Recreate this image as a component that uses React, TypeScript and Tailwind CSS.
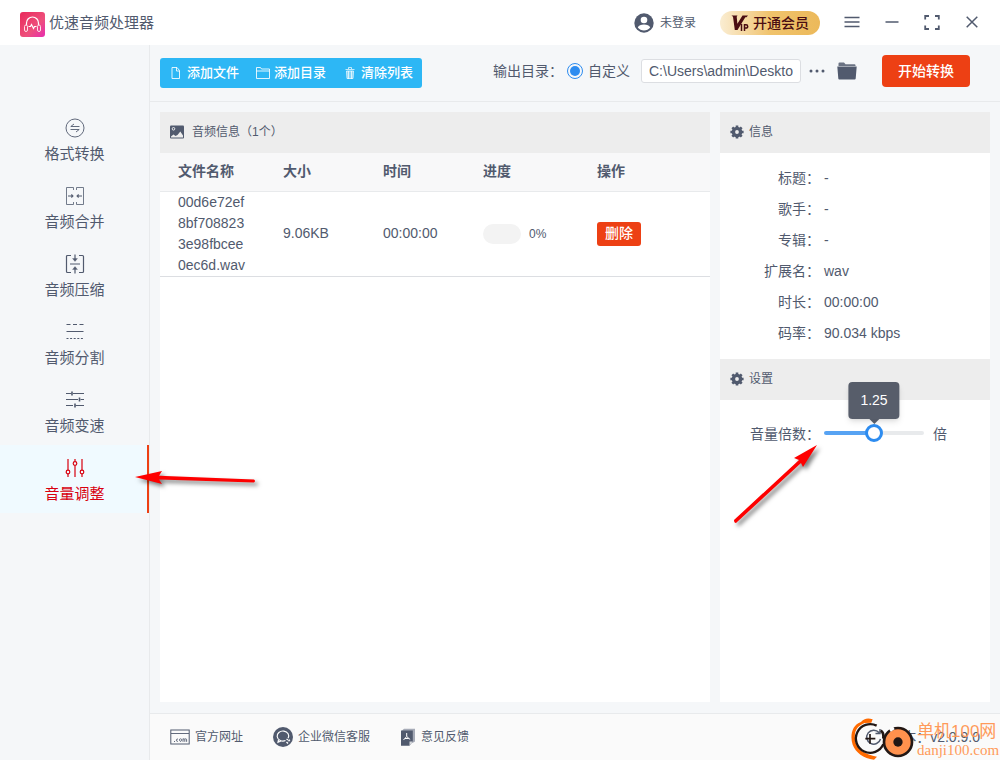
import type { ReactNode } from "react";
import { useState } from "react";

const menu = [
  { label: "格式转换", icon: <ConvertIcon /> },
  { label: "音频合并", icon: <MergeIcon /> },
  { label: "音频压缩", icon: <CompressIcon /> },
  { label: "音频分割", icon: <SplitIcon /> },
  { label: "音频变速", icon: <SpeedIcon /> },
  { label: "音量调整", icon: <VolumeIcon /> },
];

const info = [
  { label: "标题：", value: "-" },
  { label: "歌手：", value: "-" },
  { label: "专辑：", value: "-" },
  { label: "扩展名：", value: "wav" },
  { label: "时长：", value: "00:00:00" },
  { label: "码率：", value: "90.034 kbps" },
];

/* Sidebar icons */

function MenuSvg({ children }: { children: ReactNode }) {
  return (
    <svg width="20" height="20" viewBox="0 0 20 20" fill="none" stroke="currentColor">
      {children}
    </svg>
  );
}

function ConvertIcon() {
  return (
    <MenuSvg>
      <circle cx="10" cy="10" r="9" strokeWidth=".9" />
      <path d="M14.500 8.500H5.800L9 6M5.500 11.500h8.700L11 14" strokeWidth=".9" />
    </MenuSvg>
  );
}

function MergeIcon() {
  return (
    <MenuSvg>
      <path d="M8.500 4V1.500h-7v17h7V16M11.500 4V1.500h7v17h-7V16" strokeWidth=".8" />
      <path d="M3 10h5M12 10h5" />
      <path d="M6.500 8l2 2-2 2zM13.500 8l-2 2 2 2z" fill="currentColor" strokeWidth=".3" />
    </MenuSvg>
  );
}

function CompressIcon() {
  return (
    <MenuSvg>
      <path d="M6 1.500H2.500a1 1 0 0 0-1 1v15a1 1 0 0 0 1 1H6M14 1.500h3.500a1 1 0 0 1 1 1v15a1 1 0 0 1-1 1H14" strokeWidth="1.200" />
      <path d="M5 10h10M10 .5v5M10 19.500v-5" strokeWidth="1.200" />
      <path d="M7.500 4.500h5L10 7.500zM7.500 15.500h5L10 12.500z" fill="currentColor" strokeWidth=".3" />
    </MenuSvg>
  );
}

function SplitIcon() {
  return (
    <MenuSvg>
      <path d="M1.500 2.500h4M8 2.500h4M14.500 2.500h4M1.500 9.500h17" strokeWidth="1.200" />
      <path d="M1.500 16.500h17" strokeDasharray="2 1.600" />
    </MenuSvg>
  );
}

function SpeedIcon() {
  return (
    <MenuSvg>
      <path d="M1 3.500h5.500M8 3.500h11M1 9.500h12M15.500 9.500H19M1 15.500h7M10.500 15.500H19" />
      <path d="M7 1.500v4M14.500 7.500v4M10 13.500v4" strokeWidth="1.600" />
    </MenuSvg>
  );
}

function VolumeIcon() {
  return (
    <MenuSvg>
      <path d="M3 1v11M3 16v3M10 1v2.500M10 7.500V19M17 1v11M17 16v3" strokeWidth="1.200" />
      <circle cx="3" cy="14" r="1.800" strokeWidth="1.200" />
      <circle cx="10" cy="5.500" r="1.800" strokeWidth="1.200" />
      <circle cx="17" cy="14" r="1.800" strokeWidth="1.200" />
    </MenuSvg>
  );
}

/* Other icons */

function LogoIcon() {
  return (
    <svg width="25" height="25" viewBox="0 0 25 25" fill="none">
      <defs>
        <linearGradient id="logo" x1="0" y1="0" x2="1" y2="1">
          <stop offset="0" stopColor="#e9285a" />
          <stop offset=".6" stopColor="#ee4f7c" />
          <stop offset="1" stopColor="#e62db0" />
        </linearGradient>
      </defs>
      <rect width="25" height="25" rx="3" fill="url(#logo)" />
      <path d="M6.500 13v-2a6 6 0 0 1 12 0v2" stroke="#fff" strokeWidth="1.200" />
      <rect x="4.500" y="13" width="3" height="6.500" rx="1.500" stroke="#ffe0e8" />
      <rect x="17.500" y="13" width="3" height="6.500" rx="1.500" stroke="#ffe0e8" />
      <path d="M8.500 14.500h2l1-2 2 4 1-2h2" stroke="#fff" strokeWidth="1.200" />
    </svg>
  );
}

function GearIcon() {
  return (
    <svg width="14" height="14" viewBox="0 0 14 14" fill="none" stroke="currentColor">
      <circle cx="7" cy="7" r="3.600" strokeWidth="3.400" />
      <path d="M7 .4v2M7 11.600v2M.4 7h2M11.600 7h2M2.300 2.300l1.500 1.500M10.200 10.200l1.500 1.500M2.300 11.700l1.500-1.500M10.200 3.800l1.500-1.500" strokeWidth="2.600" />
    </svg>
  );
}

function FileIcon() {
  return (
    <svg width="14" height="14" viewBox="0 0 14 14" fill="none" stroke="currentColor" strokeOpacity=".85">
      <path d="M3 1.500h5l2.500 3v8H3z" />
      <path d="M7.500 1.500v3.500h3" />
    </svg>
  );
}

function DirIcon() {
  return (
    <svg width="14" height="14" viewBox="0 0 14 14" fill="none" stroke="currentColor" strokeOpacity=".85">
      <path d="M.5 12.500v-11h4l1 1.500h8v9.500zM.5 5h13" />
    </svg>
  );
}

function TrashIcon() {
  return (
    <svg width="14" height="14" viewBox="0 0 14 14" fill="none" stroke="currentColor" strokeOpacity=".7">
      <path d="M2.500 3.500h9M5.500 3V1.500h3V3" />
      <path d="M3.500 5h7l-.5 7.500H4z" fill="currentColor" fillOpacity=".4" />
      <path d="M5.500 5v8M8.500 5v8" />
    </svg>
  );
}

function PictureIcon() {
  return (
    <svg width="14" height="14" viewBox="0 0 14 14">
      <rect width="14" height="13" y=".5" rx="1" fill="#515a6e" />
      <circle cx="3.500" cy="3.800" r="1.300" fill="none" stroke="#ededed" />
      <path d="M1 12.500V11.500l2.500-2 2 1.500 2-1 2.800-3.500 2.700 4v2z" fill="#ededed" />
    </svg>
  );
}

function VipIcon() {
  return (
    <svg width="18" height="18" viewBox="0 0 18 18" fill="none">
      <path d="M.5 1.500h6l-.8 1.200.7 7L11.500 1.500H17l-1.500 1.700h-1.200L6.500 16H3.800L2 2.800z" fill="#4a0d12" />
      <path d="M10.500 10v7M13.500 17v-6.300H15a1.700 1.700 0 0 1 0 3.400h-1.500" stroke="#4a0d12" strokeWidth="1.500" />
    </svg>
  );
}

function SiteIcon() {
  return (
    <svg width="20" height="16" viewBox="0 0 20 16" fill="none" stroke="#515a6e">
      <rect x=".8" y="1" width="18.400" height="14" />
      <path d="M1 4.500h18" strokeWidth=".9" />
      <path d="M4 12.500h1M8 10.200c-2.200-1-2.200 3 0 2M10.500 9.800a1 1.300 0 1 0 .1 0M13 12.800V9.600M13 10.400c1-1.200 1.800-.6 1.800.4v2M14.800 10.400c1-1.200 1.800-.6 1.800.4v2" strokeWidth=".9" />
    </svg>
  );
}

function ServiceIcon() {
  return (
    <svg width="20" height="20" viewBox="0 0 20 20" fill="none">
      <circle cx="10" cy="10" r="10" fill="#515a6e" />
      <path d="M12.500 13.500a5.800 5 0 1 1 2.600-2.200M5.500 13l-.5 2.200 3-1.200" stroke="#fff" strokeWidth="1.200" />
      <path d="M13.500 12l1.500 1M16.800 12.800l-1.300 1.500M15 16.500l-1.500-1.500" stroke="#fff" strokeWidth="1.400" />
    </svg>
  );
}

function FeedbackIcon() {
  return (
    <svg width="16" height="18" viewBox="0 0 16 18" fill="none">
      <path d="M2 2.500L4 .8h11v12.700l-2.500 1.500" fill="#a6abb7" />
      <path d="M1 2.500h11.800v11l-3.300 4.300H1z" fill="#515a6e" />
      <path d="M12.800 13.500H9.500v4.300" fill="#d8dade" />
      <path d="M6.700 5v3.500L3.500 12M6.700 8.500l3.500 3M4.800 10.500h4" stroke="#fff" />
    </svg>
  );
}

function SiteMark() {
  return (
    <div className="pointer-events-none absolute bottom-0 right-0 flex h-11 w-[150px] items-end gap-[2px]" aria-hidden="true">
      <svg width="65" height="44" viewBox="60 78 195 132" fill="none" className="shrink-0">
        <path d="M128 88C112 82 101 87 93 96C66 105 59 137 68 164C77 187 100 205 132 209L141 200C105 194 82 179 77 157C69 127 80 108 104 99L124 98z" fill="#ff6a00" />
        <path d="M160 163a43 43 0 1 1-20-56" stroke="#221714" strokeWidth="7" />
        <path d="M106 146h30M120 132v29" stroke="#221714" strokeWidth="5" />
        <path d="M152 122q10 4 8 24" stroke="#221714" strokeWidth="8" />
        <circle cx="204" cy="156" r="42" fill="#ff914d" stroke="#221714" strokeWidth="8" />
        <path d="M177 116l12-7 5 9-12 7z" fill="#fff" />
        <circle cx="204" cy="156" r="14" fill="#221714" />
      </svg>
      <div className="whitespace-nowrap pb-[2px] text-[#ff9a5a]">
        <div className="text-[17px] leading-[20px]">单机100网</div>
        <div className="font-['Liberation_Serif',serif] text-[15px] leading-[16px]">danji100.com</div>
      </div>
    </div>
  );
}

function PanelTitle({ icon, children }: { icon: ReactNode; children: ReactNode }) {
  return (
    <h2 className="flex h-[41px] items-center bg-[#ededed] px-[10px] pb-[2px] text-xs">
      {icon}
      {children}
    </h2>
  );
}

function Header() {
  return (
    <header className="flex h-[45px] items-center justify-between bg-white pl-5 pr-2">
      <div className="flex items-center gap-1 pt-1">
        <LogoIcon />
        <h1 className="pb-1 text-[15px] leading-5">优速音频处理器</h1>
      </div>
      <div className="flex items-center">
        <button className="flex items-center gap-[6px] text-xs">
          <svg width="20" height="20" viewBox="0 0 20 20">
            <circle cx="10" cy="10" r="9.700" fill="#515a6e" />
            <circle cx="10" cy="7" r="3.300" fill="#fff" />
            <path d="M3.800 14.500c1-4 11.400-4 12.400 0c-3 4-9.400 4-12.400 0z" fill="#fff" />
          </svg>
          未登录
        </button>
        <button className="ml-6 mr-3 flex h-6 w-[100px] items-center justify-center gap-1 rounded-full bg-gradient-to-r from-[#faedd2] via-[#f0c36c] to-[#ecb95a] text-sm font-medium text-[#4a0d12]">
          <VipIcon />
          开通会员
        </button>
        <button className="flex w-10 justify-center" aria-label="菜单">
          <svg width="16" height="16" viewBox="0 0 16 16" stroke="#515a6e" strokeWidth="1.500">
            <path d="M.5 2.500h15M.5 7h15M.5 11.500h15" />
          </svg>
        </button>
        <button className="flex w-10 justify-center" aria-label="最小化">
          <svg width="14" height="16" viewBox="0 0 14 16" stroke="#515a6e" strokeWidth="1.500">
            <path d="M.5 7h13" />
          </svg>
        </button>
        <button className="flex w-10 justify-center" aria-label="全屏">
          <svg width="16" height="16" viewBox="0 0 16 16" fill="none" stroke="#515a6e" strokeWidth="1.800">
            <path d="M5 1H1.200V4.500M11 1h3.800V4.500M1.200 10.500V14H5M14.800 10.500V14H11" />
          </svg>
        </button>
        <button className="flex w-10 justify-center" aria-label="关闭">
          <svg width="12" height="16" viewBox="0 0 12 16" stroke="#515a6e" strokeWidth="1.500">
            <path d="M.7 1.700l10.600 10.600M11.300 1.700L.7 12.300" />
          </svg>
        </button>
      </div>
    </header>
  );
}

function Sidebar() {
  return (
    <nav className="w-[150px] shrink-0 border-r border-[#e8eaec] pt-[60px]">
      {menu.map((item) => {
        const active = item.label === "音量调整";
        return (
          <a
            key={item.label}
            href="#"
            className={
              active
                ? "relative flex h-[68px] flex-col items-center gap-[6px] border-r-2 border-[#ed4014] bg-[#f0faff] pl-[2px] pt-[13px] text-[15px] leading-5 text-[#d8000f]"
                : "flex h-[68px] flex-col items-center gap-[6px] pt-[13px] text-[15px] leading-5"
            }
          >
            {item.icon}
            {item.label}
            {active && (
              <svg width="130" height="30" viewBox="0 0 130 30" className="pointer-events-none absolute left-[132px] top-[18px] z-10 drop-shadow-[3px_3px_2px_rgba(0,0,0,0.5)]">
                <path d="M3 14L30 8L27 12.800L122 16.500Q124 18 122 19.500L27 16.500L30 21z" fill="#fe0000" />
              </svg>
            )}
          </a>
        );
      })}
    </nav>
  );
}

function Toolbar() {
  return (
    <div className="flex h-[57px] items-center justify-between border-b border-[#e8eaec] pl-[10px] pr-[30px]">
      <div className="flex h-[30px] rounded-[3px] bg-[#2db7f5] pr-px text-[13px] font-medium text-white">
        <button className="flex items-center gap-1 pl-[9px] pr-2">
          <FileIcon />
          添加文件
        </button>
        <button className="flex items-center gap-1 pl-[9px] pr-2">
          <DirIcon />
          添加目录
        </button>
        <button className="flex items-center gap-1 pl-[9px] pr-2">
          <TrashIcon />
          清除列表
        </button>
      </div>
      <div className="flex items-center pb-1">
        <span>输出目录：</span>
        <label className="ml-1 flex items-center gap-[5px]">
          <input
            type="radio"
            name="output"
            defaultChecked
            className="size-4 appearance-none rounded-full border border-[#2d8cf0] bg-white bg-clip-content p-[2px] checked:bg-[#2d8cf0]"
          />
          自定义
        </label>
        <input
          type="text"
          aria-label="输出目录"
          defaultValue="C:\Users\admin\Deskto"
          className="ml-[11px] h-6 w-40 rounded-[3px] border border-[#dcdee2] bg-white px-[7px]"
        />
        <button className="ml-2" aria-label="更多">
          <svg width="16" height="16" viewBox="0 0 16 16" fill="#515a6e">
            <circle cx="2" cy="8" r="1.500" />
            <circle cx="8" cy="8" r="1.500" />
            <circle cx="14" cy="8" r="1.500" />
          </svg>
        </button>
        <button className="ml-3" aria-label="打开文件夹">
          <svg width="20" height="18" viewBox="0 0 20 18" fill="#515a6e">
            <path d="M1.500 4V1.500a1 1 0 0 1 1-1H7l1.500 1.700h9a1 1 0 0 1 1 1V4z" fillOpacity=".85" />
            <path d="M.3 4.600h19.400l-1 12a1 1 0 0 1-1 .9H2.300a1 1 0 0 1-1-.9z" />
          </svg>
        </button>
        <button className="ml-[25px] h-8 w-[88px] rounded-[4px] bg-[#ed4014] font-medium text-white">开始转换</button>
      </div>
    </div>
  );
}

function FilePanel() {
  return (
    <section className="min-w-0 flex-1 bg-white">
      <PanelTitle icon={<span className="mr-2"><PictureIcon /></span>}>音频信息（1个）</PanelTitle>
      <table className="w-full table-fixed border-collapse text-left leading-[21px]">
        <thead>
          <tr className="h-[38px] border-b border-[#e8eaec] bg-[#f8f8f9]">
            <th className="w-[105px] px-[18px] font-bold">文件名称</th>
            <th className="w-[100px] px-[18px] font-bold">大小</th>
            <th className="w-[100px] px-[18px] font-bold">时间</th>
            <th className="w-[114px] px-[18px] font-bold">进度</th>
            <th className="px-[18px] font-bold">操作</th>
          </tr>
        </thead>
        <tbody>
          <tr className="border-b border-[#dcdee2]">
            <td className="break-all px-[18px]">00d6e72ef8bf7088233e98fbcee0ec6d.wav</td>
            <td className="px-[18px]">9.06KB</td>
            <td className="px-[18px]">00:00:00</td>
            <td className="px-[18px]">
              <div className="flex items-center gap-2 text-xs">
                <div className="h-5 w-[38px] rounded-full bg-[#f3f3f3]" />
                0%
              </div>
            </td>
            <td className="px-[18px]">
              <button className="h-6 w-11 rounded-[3px] bg-[#ed4014] font-medium text-white">删除</button>
            </td>
          </tr>
        </tbody>
      </table>
    </section>
  );
}

function VolumeSlider() {
  const [volume, setVolume] = useState(1.25);
  const percent = (volume / 2.5) * 100;

  return (
    <div className="relative flex h-[31px] items-center">
      <label htmlFor="volume" className="w-[100px] text-right">
        音量倍数：
      </label>
      <div className="relative ml-1 flex w-[100px] items-center pb-[2px]">
        <input
          id="volume"
          type="range"
          min="0"
          max="2.5"
          step="0.05"
          value={volume}
          onChange={(e) => setVolume(Number(e.target.value))}
          className="h-1 w-full appearance-none rounded-full [&::-webkit-slider-thumb]:size-[18px] [&::-webkit-slider-thumb]:appearance-none [&::-webkit-slider-thumb]:rounded-full [&::-webkit-slider-thumb]:border-3 [&::-webkit-slider-thumb]:border-[#2d8cf0] [&::-webkit-slider-thumb]:bg-white"
          style={{ background: `linear-gradient(to right, #57a3f3 ${percent}%, #e8eaec ${percent}%)` }}
        />
        <output
          htmlFor="volume"
          className="absolute bottom-[18px] -translate-x-1/2 rounded-[4px] bg-[#464c5b]/90 px-3 py-2 leading-[21px] text-white shadow-md after:absolute after:left-1/2 after:top-full after:-translate-x-1/2 after:border-5 after:border-b-0 after:border-transparent after:border-t-[#464c5b]/90"
          style={{ left: `${percent}%` }}
        >
          {volume.toFixed(2)}
        </output>
      </div>
      <span className="ml-[9px]">倍</span>
      <svg width="96" height="90" viewBox="0 0 96 90" className="pointer-events-none absolute left-[10px] top-[22px] drop-shadow-[3px_3px_2px_rgba(0,0,0,0.5)]">
        <path d="M87 5L73 27L71 23L6 83Q4 83 4 80L69 20L64 18z" fill="#fe0000" />
      </svg>
    </div>
  );
}

function SidePanel() {
  return (
    <section className="w-[270px] shrink-0 bg-white">
      <PanelTitle icon={<span className="mr-[5px]"><GearIcon /></span>}>信息</PanelTitle>
      <dl className="py-[10px] leading-[31px]">
        {info.map((row) => (
          <div key={row.label} className="flex gap-1">
            <dt className="w-[100px] text-right">{row.label}</dt>
            <dd>{row.value}</dd>
          </div>
        ))}
      </dl>
      <PanelTitle icon={<span className="mr-[5px]"><GearIcon /></span>}>设置</PanelTitle>
      <div className="pt-[18px]">
        <VolumeSlider />
      </div>
    </section>
  );
}

function Footer() {
  return (
    <footer className="relative flex h-[47px] items-center justify-between border-t border-[#e8eaec] bg-[#fafafa] px-5">
      <div className="flex items-center gap-[30px] text-xs">
        <a href="#" className="flex items-center gap-[5px]">
          <SiteIcon />
          官方网址
        </a>
        <a href="#" className="flex items-center gap-[5px]">
          <ServiceIcon />
          企业微信客服
        </a>
        <a href="#" className="flex items-center gap-[5px]">
          <FeedbackIcon />
          意见反馈
        </a>
      </div>
      <div className="flex items-center gap-[5px]">
        <svg width="18" height="18" viewBox="0 0 18 18" fill="none" stroke="#515a6e" strokeWidth="1.500">
          <path d="M15.500 11A7 7 0 1 1 14 4.500M15 1v4.500h-4.500" />
        </svg>
        <span>版本：v2.0.9.0</span>
      </div>
      <SiteMark />
    </footer>
  );
}

export default function App() {
  return (
    <div className="flex min-h-screen flex-col bg-[#f5f7f9] font-['Liberation_Sans','Noto_Sans_CJK_SC',sans-serif] text-sm text-[#515a6e]">
      <Header />
      <div className="flex flex-1">
        <Sidebar />
        <div className="flex min-w-0 flex-1 flex-col">
          <Toolbar />
          <main className="flex flex-1 gap-[10px] px-[10px] pb-[11px] pt-[10px]">
            <FilePanel />
            <SidePanel />
          </main>
          <Footer />
        </div>
      </div>
    </div>
  );
}
